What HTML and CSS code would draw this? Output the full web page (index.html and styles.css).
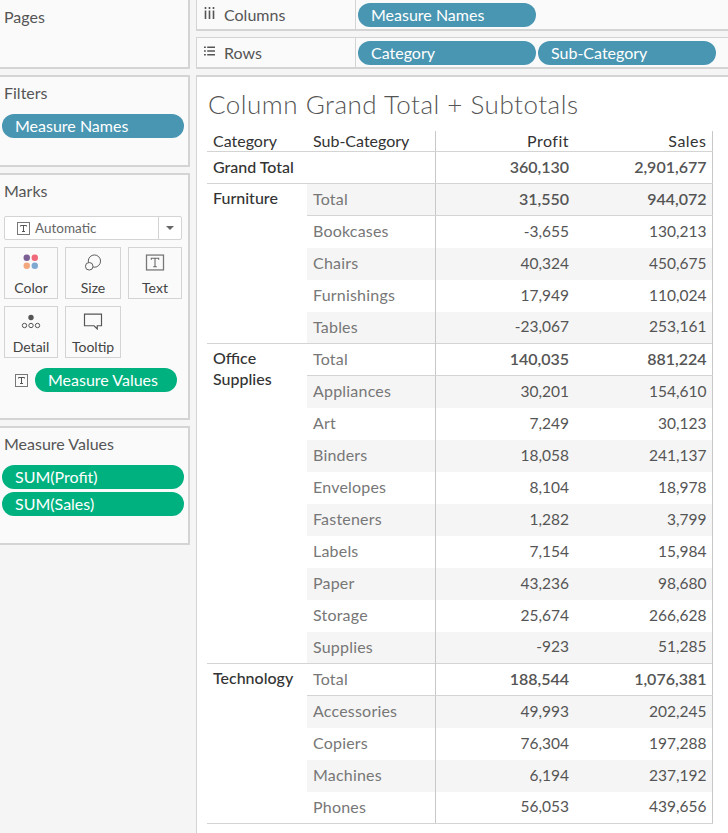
FILE: index.html

```html
<!DOCTYPE html>
<html lang="en">
<head>
    <meta charset="UTF-8">
    <title>Column Grand Total + Subtotals</title>
    <link rel="stylesheet" href="styles.css">
</head>
<body>
    <div class="app">
        <!-- Left side cards -->
        <aside class="sidebar">
            <section class="card pages-card">
                <h2 class="card-title">Pages</h2>
            </section>
            <section class="card filters-card">
                <h2 class="card-title">Filters</h2>
                <div class="pill pill-blue side-pill">Measure Names</div>
            </section>
            <section class="card marks-card">
                <h2 class="card-title">Marks</h2>
                <div class="mark-select">
                    <svg class="t-icon" viewBox="0 0 13 13"><rect x="0.5" y="0.5" width="12" height="12" fill="none" stroke="#777"/><path d="M3.5 4.5v-1h6v1M6.5 3.5v6M5 9.5h3" fill="none" stroke="#555"/></svg>
                    <span class="mark-select-label">Automatic</span>
                    <span class="mark-select-arrow"></span>
                </div>
                <div class="mark-grid">
                    <div class="mark-btn">
                        <svg class="mark-icon" viewBox="0 0 18 18"><circle cx="4.5" cy="4" r="3.4" fill="#7b5f94"/><circle cx="13" cy="4" r="3.4" fill="#f0697b"/><circle cx="4.5" cy="12.5" r="3.4" fill="#f2a77d"/><circle cx="13" cy="12.5" r="3.4" fill="#7fa9d0"/></svg>
                        <span>Color</span>
                    </div>
                    <div class="mark-btn">
                        <svg class="mark-icon" viewBox="0 0 18 18"><circle cx="10.5" cy="7.5" r="6.5" fill="none" stroke="#555"/><circle cx="5" cy="13" r="4" fill="#fafafa" stroke="#555"/></svg>
                        <span>Size</span>
                    </div>
                    <div class="mark-btn">
                        <svg class="mark-icon" viewBox="0 0 18 16"><rect x="1" y="1" width="16" height="14" fill="none" stroke="#777" stroke-width="1.2"/><path d="M5.5 5.5v-1.5h7v1.5M9 4v8M7.3 12h3.4" fill="none" stroke="#666"/></svg>
                        <span>Text</span>
                    </div>
                    <div class="mark-btn">
                        <svg class="mark-icon" viewBox="0 0 20 16"><circle cx="10" cy="4" r="2.7" fill="#555"/><circle cx="3.5" cy="12" r="2.2" fill="none" stroke="#555"/><circle cx="10" cy="12" r="2.2" fill="none" stroke="#555"/><circle cx="16.5" cy="12" r="2.2" fill="none" stroke="#555"/></svg>
                        <span>Detail</span>
                    </div>
                    <div class="mark-btn">
                        <svg class="mark-icon" viewBox="0 0 18 16"><path d="M1 1h16v11h-4v3l-3-3H1z" fill="none" stroke="#555" stroke-width="1.1"/></svg>
                        <span>Tooltip</span>
                    </div>
                </div>
                <div class="mark-field">
                    <svg class="t-icon" viewBox="0 0 13 13"><rect x="0.5" y="0.5" width="12" height="12" fill="none" stroke="#777"/><path d="M3.5 4.5v-1h6v1M6.5 3.5v6M5 9.5h3" fill="none" stroke="#555"/></svg>
                    <div class="pill pill-green">Measure Values</div>
                </div>
            </section>
            <section class="card values-card">
                <h2 class="card-title">Measure Values</h2>
                <div class="pill pill-green side-pill">SUM(Profit)</div>
                <div class="pill pill-green side-pill">SUM(Sales)</div>
            </section>
        </aside>

        <main class="content">
            <div class="shelf columns-shelf">
                <div class="shelf-label">
                    <svg class="shelf-icon" viewBox="0 0 11 12"><path d="M1.5 0v2M1.5 3.5V12M5.5 0v2M5.5 3.5V12M9.5 0v2M9.5 3.5V12" stroke="#555" stroke-width="1.6" fill="none"/></svg>
                    <span>Columns</span>
                </div>
                <div class="shelf-pills">
                    <div class="pill pill-blue">Measure Names</div>
                </div>
            </div>
            <div class="shelf rows-shelf">
                <div class="shelf-label">
                    <svg class="shelf-icon" viewBox="0 0 12 10"><path d="M0 1h2M3.5 1H12M0 5h2M3.5 5H12M0 9h2M3.5 9H12" stroke="#555" stroke-width="1.6" fill="none"/></svg>
                    <span>Rows</span>
                </div>
                <div class="shelf-pills">
                    <div class="pill pill-blue">Category</div>
                    <div class="pill pill-blue">Sub-Category</div>
                </div>
            </div>

            <div class="view">
                <h1 class="view-title">Column Grand Total + Subtotals</h1>
                <table class="crosstab">
                    <colgroup>
                        <col class="col-cat"><col class="col-sub"><col class="col-profit"><col class="col-sales">
                    </colgroup>
                    <thead>
                        <tr><th>Category</th><th>Sub-Category</th><th class="num">Profit</th><th class="num">Sales</th></tr>
                    </thead>
                    <tbody>
                        <tr class="grand"><td class="cat" colspan="2">Grand Total</td><td class="num">360,130</td><td class="num">2,901,677</td></tr>

                        <tr class="total shade"><td class="cat" rowspan="5">Furniture</td><td class="sub">Total</td><td class="num">31,550</td><td class="num">944,072</td></tr>
                        <tr class="after-total"><td class="sub">Bookcases</td><td class="num">-3,655</td><td class="num">130,213</td></tr>
                        <tr class="shade"><td class="sub">Chairs</td><td class="num">40,324</td><td class="num">450,675</td></tr>
                        <tr><td class="sub">Furnishings</td><td class="num">17,949</td><td class="num">110,024</td></tr>
                        <tr class="shade"><td class="sub">Tables</td><td class="num">-23,067</td><td class="num">253,161</td></tr>

                        <tr class="total"><td class="cat" rowspan="10">Office Supplies</td><td class="sub">Total</td><td class="num">140,035</td><td class="num">881,224</td></tr>
                        <tr class="shade"><td class="sub">Appliances</td><td class="num">30,201</td><td class="num">154,610</td></tr>
                        <tr><td class="sub">Art</td><td class="num">7,249</td><td class="num">30,123</td></tr>
                        <tr class="shade"><td class="sub">Binders</td><td class="num">18,058</td><td class="num">241,137</td></tr>
                        <tr><td class="sub">Envelopes</td><td class="num">8,104</td><td class="num">18,978</td></tr>
                        <tr class="shade"><td class="sub">Fasteners</td><td class="num">1,282</td><td class="num">3,799</td></tr>
                        <tr><td class="sub">Labels</td><td class="num">7,154</td><td class="num">15,984</td></tr>
                        <tr class="shade"><td class="sub">Paper</td><td class="num">43,236</td><td class="num">98,680</td></tr>
                        <tr><td class="sub">Storage</td><td class="num">25,674</td><td class="num">266,628</td></tr>
                        <tr class="shade"><td class="sub">Supplies</td><td class="num">-923</td><td class="num">51,285</td></tr>

                        <tr class="total"><td class="cat" rowspan="5">Technology</td><td class="sub">Total</td><td class="num">188,544</td><td class="num">1,076,381</td></tr>
                        <tr class="shade"><td class="sub">Accessories</td><td class="num">49,993</td><td class="num">202,245</td></tr>
                        <tr><td class="sub">Copiers</td><td class="num">76,304</td><td class="num">197,288</td></tr>
                        <tr class="shade"><td class="sub">Machines</td><td class="num">6,194</td><td class="num">237,192</td></tr>
                        <tr><td class="sub">Phones</td><td class="num">56,053</td><td class="num">439,656</td></tr>
                    </tbody>
                </table>
            </div>
        </main>
    </div>
</body>
</html>
```

FILE: styles.css

```css
body {
    margin: 0;
    height: 833px;
    overflow: hidden;
    background-color: #f5f5f5;
    font-family: Lato, "Open Sans", sans-serif;
    font-size: 16px;
    color: #555;
}

.app {
    display: flex;
    gap: 6px;
}

/* Left side cards */
.sidebar {
    width: 190px;
    flex: none;
    display: flex;
    flex-direction: column;
    gap: 6px;
}

.card {
    background-color: #fafafa;
    border-right: 2px solid #d4d4d4;
    border-bottom: 2px solid #d4d4d4;
    box-sizing: border-box;
}

.filters-card,
.marks-card,
.values-card {
    border-top: 2px solid #d4d4d4;
}

.pages-card { height: 69px; padding-top: 7px; }
.filters-card { height: 92px; padding-top: 6px; }
.marks-card { height: 247px; padding-top: 6px; }
.values-card { height: 119px; padding-top: 6px; }

.card-title {
    margin: 0;
    padding-left: 4px;
    font-size: 16px;
    font-weight: normal;
    line-height: 20px;
    color: #555;
}

.pill {
    height: 24px;
    line-height: 24px;
    width: 178px;
    box-sizing: border-box;
    padding-left: 13px;
    border-radius: 12px;
    color: #fff;
    font-size: 16px;
    flex: none;
}

.pill-blue { background-color: #4996b2; }
.pill-green { background-color: #00b180; }

.side-pill {
    width: 182px;
    margin-left: 2px;
    margin-bottom: 3px;
}

.filters-card .side-pill,
.values-card .side-pill:first-of-type {
    margin-top: 11px;
}

/* Marks card */
.mark-select {
    display: flex;
    align-items: center;
    height: 22px;
    margin: 15px 6px 0 4px;
    padding-left: 12px;
    background-color: #fff;
    border: 1px solid #d4d4d4;
    border-radius: 2px;
    font-size: 13.5px;
    color: #666;
}

.t-icon {
    width: 13px;
    height: 13px;
    flex: none;
}

.mark-select-label {
    margin-left: 5px;
    flex: 1;
}

.mark-select-arrow {
    width: 22px;
    height: 22px;
    border-left: 1px solid #d4d4d4;
    position: relative;
}

.mark-select-arrow::after {
    content: "";
    position: absolute;
    left: 7px;
    top: 9px;
    border-left: 4px solid transparent;
    border-right: 4px solid transparent;
    border-top: 4px solid #666;
}

.mark-grid {
    display: grid;
    grid-template-columns: 54px 56px 54px;
    grid-auto-rows: 52px;
    column-gap: 7px;
    row-gap: 7px;
    margin: 7px 0 0 4px;
}

.mark-btn {
    display: flex;
    flex-direction: column;
    align-items: center;
    justify-content: space-between;
    border: 1px solid #d4d4d4;
    padding: 6px 0 2px;
    font-size: 14px;
    line-height: 17px;
    color: #444;
}

.mark-icon {
    width: 20px;
    height: 17px;
}

.mark-field {
    display: flex;
    align-items: center;
    gap: 7px;
    margin: 10px 0 0 15px;
}

.mark-field .pill {
    width: 142px;
}

/* Shelves */
.content {
    width: 532px;
    flex: none;
    display: flex;
    flex-direction: column;
    gap: 6px;
}

.shelf {
    display: flex;
    background-color: #fafafa;
    border-left: 1px solid #d4d4d4;
    border-bottom: 2px solid #d4d4d4;
    box-sizing: border-box;
}

.columns-shelf { height: 31px; }
.rows-shelf { height: 32px; border-top: 1px solid #d4d4d4; }

.shelf-label {
    width: 159px;
    flex: none;
    display: flex;
    align-items: center;
    gap: 9px;
    padding-left: 7px;
    box-sizing: border-box;
    border-right: 1px solid #d4d4d4;
}

.shelf-icon {
    width: 11px;
    height: 12px;
    margin-bottom: 3px;
}

.shelf-pills {
    display: flex;
    gap: 2px;
    align-items: center;
    padding-left: 2px;
    margin-top: 1px;
}

/* View */
.view {
    background-color: #fff;
    border-top: 2px solid #d4d4d4;
    border-left: 1px solid #d4d4d4;
    height: 758px;
    box-sizing: border-box;
    padding: 10px 16px 0 10px;
}

.view-title {
    margin: 0 0 10px 1px;
    font-size: 26px;
    font-weight: 300;
    line-height: 34px;
    color: #555;
    letter-spacing: 0.5px;
}

.crosstab {
    width: 505px;
    table-layout: fixed;
    border-collapse: collapse;
}

.col-cat { width: 100px; }
.col-sub { width: 128px; }
.col-profit { width: 139px; }
.col-sales { width: 138px; }

.crosstab th,
.crosstab td {
    padding: 0 5px 0 6px;
    height: 32px;
    box-sizing: border-box;
    font-size: 16px;
    text-align: left;
    white-space: nowrap;
}

.crosstab th {
    height: 20px;
    font-weight: normal;
    color: #333;
    border-bottom: 1px solid #d4d4d4;
    line-height: 20px;
}

.crosstab .num {
    text-align: right;
    padding-bottom: 2px;
    font-size: 15.5px;
    color: #555;
    border-left: 1px solid #c8c8c8;
}

.crosstab th.num {
    padding-bottom: 0;
    font-size: 16px;
    letter-spacing: 0.5px;
    color: #333;
}

.crosstab .num + .num { border-left: none; border-right: 1px solid #c8c8c8; }

.crosstab .cat {
    color: #333;
    font-weight: 500;
    vertical-align: top;
    padding-top: 3px;
    white-space: normal;
    line-height: 21px;
    background-color: #fff;
}

.crosstab .sub {
    padding-bottom: 2px;
    color: #777;
    letter-spacing: 0.2px;
}

.grand td { border-bottom: 1px solid #d4d4d4; padding-bottom: 2px; }
.crosstab .grand .cat { padding-top: 0; vertical-align: middle; }
.grand .num { font-weight: 600; font-size: 16px; }

.shade td { background-color: #f5f5f5; }
.shade td.cat { background-color: #fff; }

.total td { border-top: 1px solid #d4d4d4; border-bottom: 1px solid #d4d4d4; }
.crosstab .total .num { font-weight: 600; font-size: 16px; }

.crosstab tbody tr:last-child td { border-bottom: 1px solid #d4d4d4; }
```
